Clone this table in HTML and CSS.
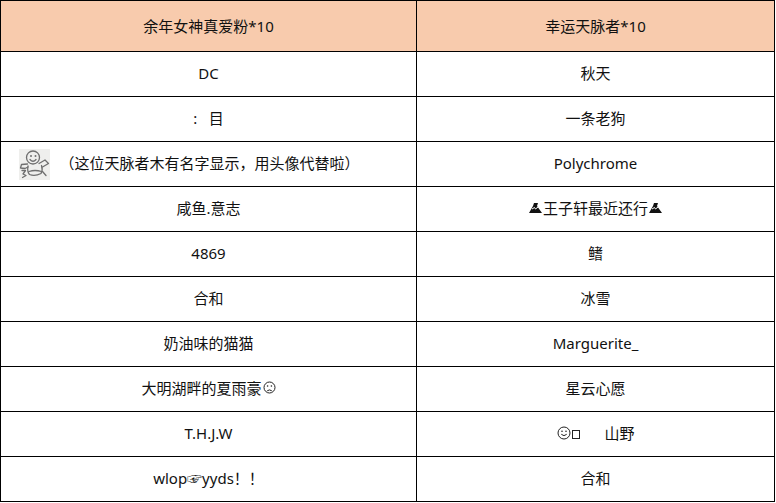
FILE: index.html
```html
<!DOCTYPE html>
<html lang="zh">
<head>
<meta charset="utf-8">
<title>名单</title>
<link rel="stylesheet" href="styles.css">
</head>
<body>
<div class="grid">
  <div class="cell head">余年女神真爱粉*10</div>
  <div class="cell head">幸运天脉者*10</div>

  <div class="cell">DC</div>
  <div class="cell">秋天</div>

  <div class="cell">:&nbsp;&nbsp;&nbsp;目</div>
  <div class="cell">一条老狗</div>

  <div class="cell avatar-cell">
    <svg class="avatar" width="31" height="31" viewBox="0 0 31 31">
      <rect width="31" height="31" fill="#efefed"/>
      <g fill="none" stroke="#6f6f6f" stroke-width="1.3" stroke-linecap="round" stroke-linejoin="round">
        <circle cx="14" cy="8.5" r="6.5"/>
        <path d="M11 10.5 Q14 14 17 10.5"/>
        <path d="M8.5 15 L2.5 15.5 L1.5 19 L6 19.5 L9 18"/>
        <path d="M20 14.5 L26 11 L29.5 14.5 L23.5 18"/>
        <path d="M9 17 Q8 23 10.5 25.5 Q16 27.5 22 24.5 Q24 21 22.5 16.5"/>
        <path d="M10 22.5 Q16 20.5 22.5 22.5"/>
        <path d="M3 21.5 L6.5 21.5 L4 25 L7 26.5 L3.5 28.5"/>
        <path d="M23.5 22.5 L27 26.5"/>
      </g>
      <g fill="#6f6f6f">
        <circle cx="12" cy="7" r="1"/>
        <circle cx="16.5" cy="7" r="1"/>
      </g>
    </svg>
    <span>（这位天脉者木有名字显示，用头像代替啦）</span>
  </div>
  <div class="cell">Polychrome</div>

  <div class="cell">咸鱼.意志</div>
  <div class="cell">
    <svg class="mtn" width="13" height="11" viewBox="0 0 13 11"><path d="M0 11 L4 4 L5 1 L9 1 L8 4 L13 11 Z" fill="#111"/><path d="M3 7 L5.5 5.5 L6.5 7 L9 5" stroke="#fff" stroke-width="1" fill="none"/></svg>王子轩最近还行<svg class="mtn" width="13" height="11" viewBox="0 0 13 11"><path d="M0 11 L4 4 L5 1 L9 1 L8 4 L13 11 Z" fill="#111"/><path d="M3 7 L5.5 5.5 L6.5 7 L9 5" stroke="#fff" stroke-width="1" fill="none"/></svg>
  </div>

  <div class="cell">4869</div>
  <div class="cell">鳍</div>

  <div class="cell">合和</div>
  <div class="cell">冰雪</div>

  <div class="cell">奶油味的猫猫</div>
  <div class="cell">Marguerite_</div>

  <div class="cell">大明湖畔的夏雨豪<svg class="face" width="13" height="13" viewBox="0 0 13 13"><g fill="none" stroke="#222" stroke-width="1"><circle cx="6.5" cy="6.5" r="5.5"/><path d="M4.2 9.8 Q6.5 8 8.8 9.8"/></g><circle cx="4.6" cy="5" r="0.8" fill="#222"/><circle cx="8.4" cy="5" r="0.8" fill="#222"/></svg></div>
  <div class="cell">星云心愿</div>

  <div class="cell">T.H.J.W</div>
  <div class="cell"><svg class="face" width="14" height="14" viewBox="0 0 14 14"><g fill="none" stroke="#222" stroke-width="1"><circle cx="7" cy="7" r="6"/><path d="M4.3 8.3 Q7 11 9.7 8.3"/></g><circle cx="5" cy="5.3" r="0.8" fill="#222"/><circle cx="9" cy="5.3" r="0.8" fill="#222"/></svg><span class="tofu"></span><span class="gap"></span>山野</div>

  <div class="cell">wlop☞yyds！！</div>
  <div class="cell">合和</div>
</div>
</body>
</html>
```
FILE: styles.css
```css
html, body {
  margin: 0;
  padding: 0;
  background: #fff;
}
.grid {
  display: grid;
  grid-template-columns: 415px 357px;
  grid-template-rows: 50px repeat(10, 44px);
  gap: 1px;
  padding: 1px;
  background: #000;
  width: max-content;
  font-family: "Noto Sans", "Noto Sans CJK SC", sans-serif;
  font-size: 15px;
  color: #111;
}
.cell {
  background: #fff;
  display: flex;
  align-items: center;
  justify-content: center;
  white-space: pre;
  padding-bottom: 3px;
  box-sizing: border-box;
}
.head {
  background: #f8cbad;
  padding-bottom: 2px;
}
.avatar-cell {
  gap: 9px;
  padding-right: 38px;
}
.avatar {
  display: block;
  margin-top: 3px;
}
.mtn {
  display: inline-block;
  margin: 0 1px 1px;
}
.face {
  margin-left: 1px;
}
.tofu {
  display: inline-block;
  width: 6px;
  height: 7px;
  border: 1px solid #222;
  margin: 3px 0 0 1px;
}
.gap {
  display: inline-block;
  width: 24px;
}
```
